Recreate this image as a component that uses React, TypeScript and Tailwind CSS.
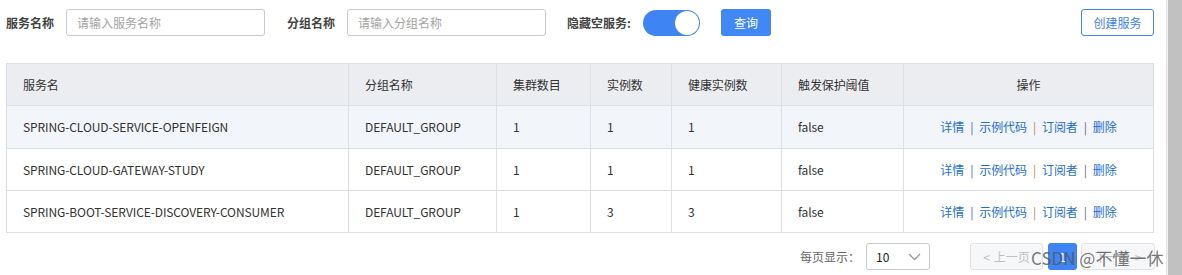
const rows = [
  { name: "SPRING-CLOUD-SERVICE-OPENFEIGN", group: "DEFAULT_GROUP", clusters: 1, instances: 1, healthy: 1, threshold: "false" },
  { name: "SPRING-CLOUD-GATEWAY-STUDY", group: "DEFAULT_GROUP", clusters: 1, instances: 1, healthy: 1, threshold: "false" },
  { name: "SPRING-BOOT-SERVICE-DISCOVERY-CONSUMER", group: "DEFAULT_GROUP", clusters: 1, instances: 3, healthy: 3, threshold: "false" },
];

const font = { fontFamily: '"Noto Sans CJK SC", "Noto Sans", sans-serif' };

function Actions() {
  return (
    <div className="flex items-center justify-center gap-[6px] text-[#1f6fd0]">
      <span>详情</span>
      <span className="text-[#3a6fb0]">|</span>
      <span>示例代码</span>
      <span className="text-[#c7873a]">|</span>
      <span>订阅者</span>
      <span className="text-[#5a6f8a]">|</span>
      <span>删除</span>
    </div>
  );
}

export default function App() {
  return (
    <div className="flex h-[275px] w-full bg-white text-[12px] text-[#333]" style={font}>
      <main className="relative w-[1166px] shrink-0">
        {/* filter bar */}
        <div className="flex items-center pl-[6px] pt-[9px] h-[36px]">
          <span className="font-bold text-[#444]">服务名称</span>
          <input
            className="ml-[12px] h-[27px] w-[199px] rounded-[3px] border border-[#c8cad2] px-[10px] outline-none placeholder:text-[#a3a3a3]"
            placeholder="请输入服务名称"
          />
          <span className="ml-[22px] font-bold text-[#444]">分组名称</span>
          <input
            className="ml-[12px] h-[27px] w-[199px] rounded-[3px] border border-[#c8cad2] px-[10px] outline-none placeholder:text-[#a3a3a3]"
            placeholder="请输入分组名称"
          />
          <span className="ml-[21px] font-bold text-[#444]">隐藏空服务:</span>
          <div className="ml-[12px] flex h-[26px] w-[57px] items-center justify-end rounded-full bg-[#3f84f3] pr-[1px]">
            <div className="h-[24px] w-[24px] rounded-full bg-white" />
          </div>
          <button className="ml-[21px] h-[27px] w-[50px] rounded-[3px] bg-[#3f88f5] text-white">查询</button>
          <button className="ml-auto mr-[12px] h-[27px] w-[73px] rounded-[3px] border border-[#3f88f5] text-[#3f7ff0]">
            创建服务
          </button>
        </div>

        {/* table */}
        <div className="ml-[6px] mt-[27px] w-[1148px]">
          <table className="w-full table-fixed border-collapse border border-[#dcdfe6] tracking-[-0.1px]">
            <colgroup>
              <col className="w-[342px]" />
              <col className="w-[148px]" />
              <col className="w-[94px]" />
              <col className="w-[81px]" />
              <col className="w-[110px]" />
              <col className="w-[122px]" />
              <col />
            </colgroup>
            <thead>
              <tr className="h-[42px] bg-[#ebedf0] text-left">
                <th className="border border-[#dcdfe6] pl-[16px] font-normal">服务名</th>
                <th className="border border-[#dcdfe6] pl-[16px] font-normal">分组名称</th>
                <th className="border border-[#dcdfe6] pl-[16px] font-normal">集群数目</th>
                <th className="border border-[#dcdfe6] pl-[16px] font-normal">实例数</th>
                <th className="border border-[#dcdfe6] pl-[16px] font-normal">健康实例数</th>
                <th className="border border-[#dcdfe6] pl-[16px] font-normal">触发保护阈值</th>
                <th className="border border-[#dcdfe6] text-center font-normal">操作</th>
              </tr>
            </thead>
            <tbody>
              {rows.map((r, i) => (
                <tr key={r.name} className={i === 0 ? "h-[43px] bg-[#f2f5f9]" : "h-[42px] bg-white"}>
                  <td className="border border-[#dcdfe6] pl-[16px]">{r.name}</td>
                  <td className="border border-[#dcdfe6] pl-[16px]">{r.group}</td>
                  <td className="border border-[#dcdfe6] pl-[16px]">{r.clusters}</td>
                  <td className="border border-[#dcdfe6] pl-[16px]">{r.instances}</td>
                  <td className="border border-[#dcdfe6] pl-[16px]">{r.healthy}</td>
                  <td className="border border-[#dcdfe6] pl-[16px]">{r.threshold}</td>
                  <td className="border border-[#dcdfe6]">
                    <Actions />
                  </td>
                </tr>
              ))}
            </tbody>
          </table>
        </div>

        {/* pagination */}
        <div className="mt-[10px] flex items-center justify-end pr-[11px]">
          <span className="text-[#666]">每页显示：</span>
          <div className="ml-[6px] flex h-[27px] w-[64px] items-center justify-between rounded-[3px] border border-[#c8cad2] pl-[9px] pr-[8px]">
            <span className="text-[#222]">10</span>
            <svg width="13" height="8" viewBox="0 0 13 8" fill="none" stroke="#999" strokeWidth="1.3">
              <path d="M1 1l5.5 5.5L12 1" />
            </svg>
          </div>
          <button className="ml-[40px] flex h-[27px] w-[73px] items-center justify-center gap-[4px] rounded-[3px] border border-[#e3e3e3] bg-[#f6f7f9] text-[#c0c0c0]">
            <span>&lt;</span>
            <span>上一页</span>
          </button>
          <button className="ml-[5px] h-[27px] w-[29px] rounded-[3px] bg-[#3f84f3] text-white">1</button>
          <button className="ml-[4px] flex h-[27px] w-[74px] items-center justify-center gap-[4px] rounded-[3px] border border-[#e3e3e3] bg-[#f6f7f9] text-[#c0c0c0]">
            <span>下一页</span>
            <span>&gt;</span>
          </button>
        </div>

        {/* watermark */}
        <div className="pointer-events-none absolute left-[1031px] top-[245px] whitespace-nowrap text-[17px] text-[#555]/80">
          CSDN @不懂一休
        </div>
      </main>

      {/* scrollbar */}
      <div className="flex w-[16px] shrink-0 border-l border-[#e3e3e3] bg-[#f1f1f1] pl-[1px]">
        <div className="h-full w-full bg-[#c1c1c1]" />
      </div>
    </div>
  );
}
